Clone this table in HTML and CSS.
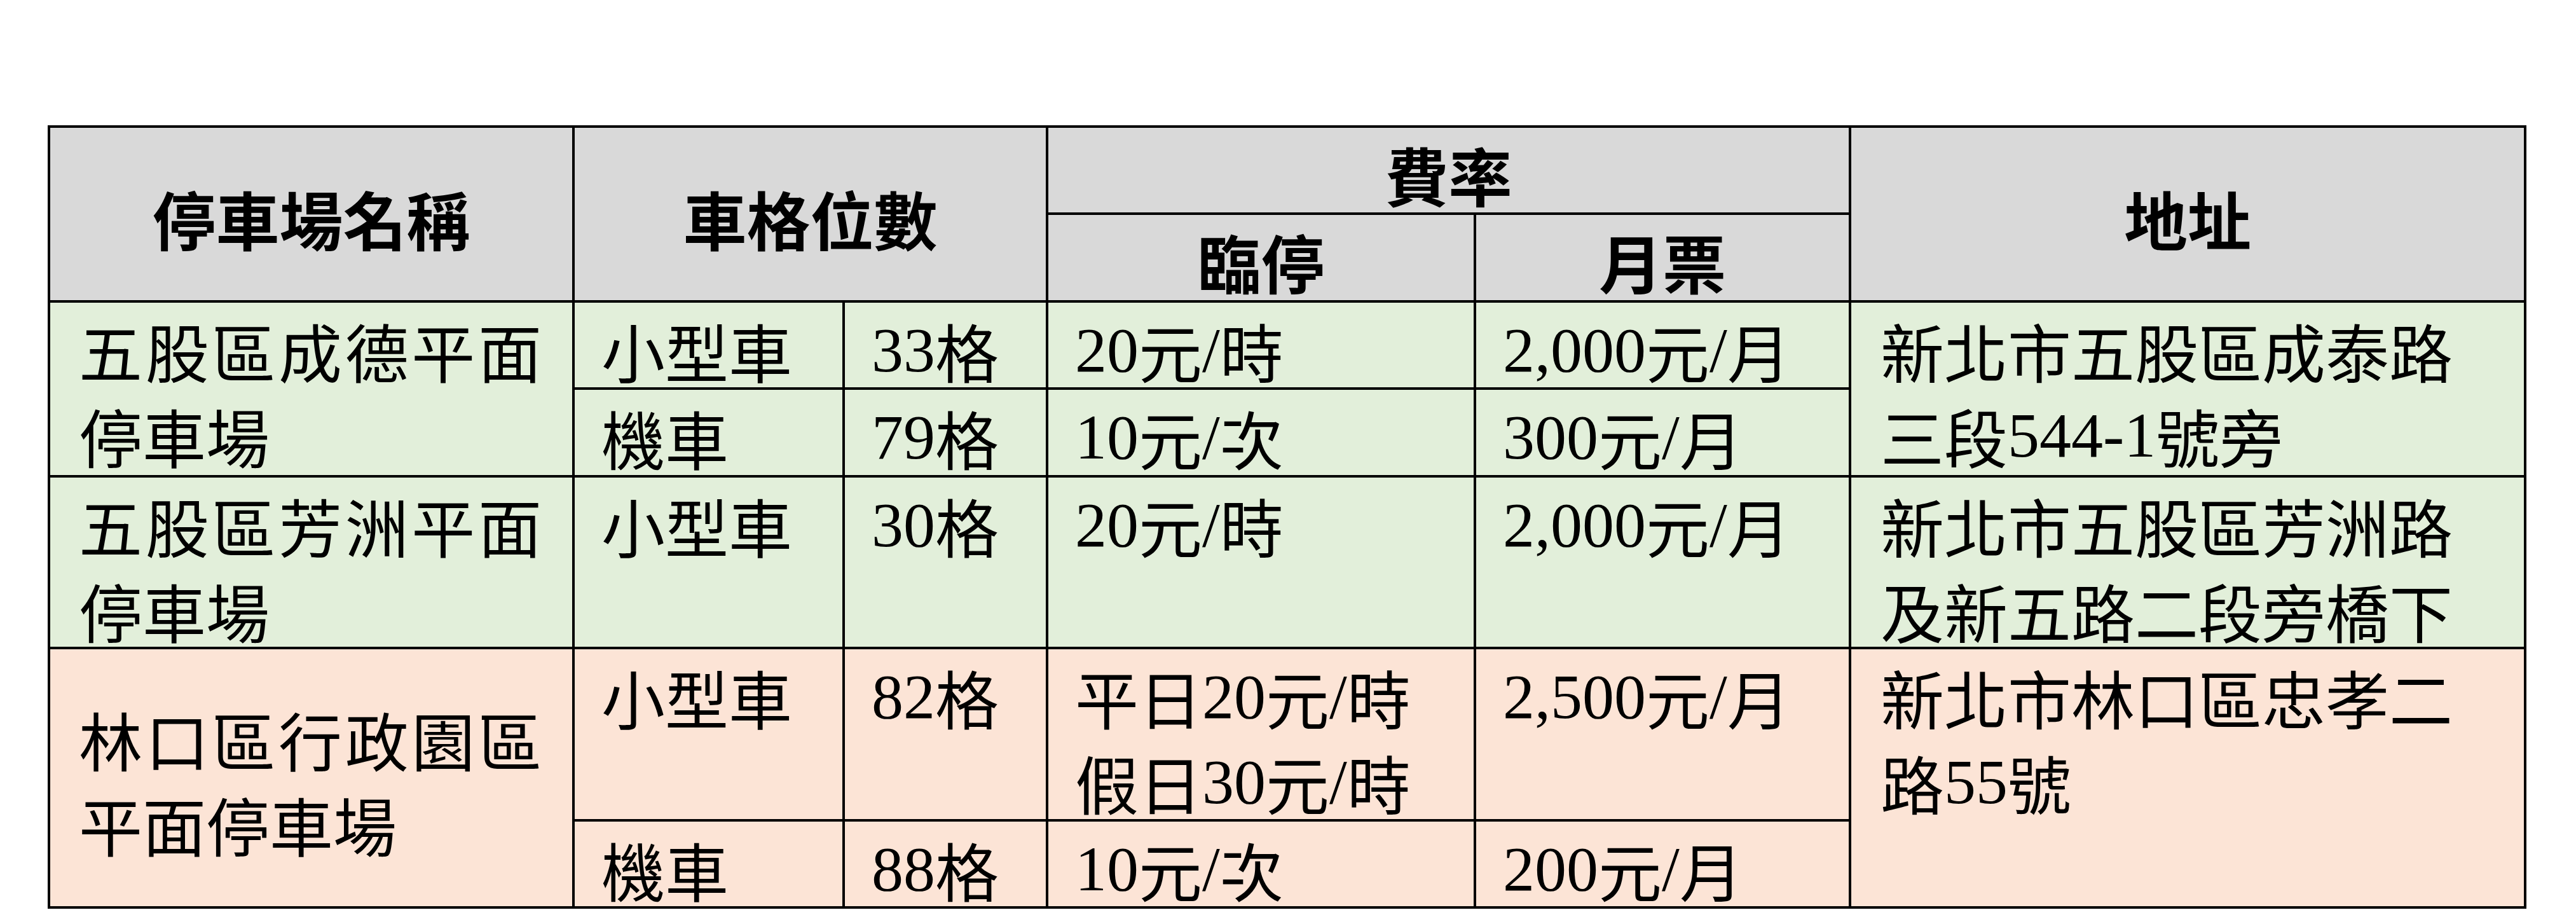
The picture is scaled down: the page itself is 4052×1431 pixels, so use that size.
FILE: index.html
```html
<!DOCTYPE html>
<html lang="zh-Hant">
<head>
<meta charset="utf-8">
<title>停車場資訊</title>
<link rel="stylesheet" href="styles.css">
</head>
<body>
<div class="sheet">
  <div class="tbl">
    <div class="cell hd r2">停車場名稱</div>
    <div class="cell hd r2 c2">車格位數</div>
    <div class="cell hd c2">費率</div>
    <div class="cell hd r2">地址</div>
    <div class="cell hd">臨停</div>
    <div class="cell hd">月票</div>

    <div class="cell g name r2">五股區成德平面停車場</div>
    <div class="cell g">小型車</div>
    <div class="cell g"><span class="n">33</span>格</div>
    <div class="cell g"><span class="n">20</span>元<span class="n">/</span>時</div>
    <div class="cell g"><span class="n">2,000</span>元<span class="n">/</span>月</div>
    <div class="cell g addr r2">新北市五股區成泰路三段<span class="n">544-1</span>號旁</div>
    <div class="cell g">機車</div>
    <div class="cell g"><span class="n">79</span>格</div>
    <div class="cell g"><span class="n">10</span>元<span class="n">/</span>次</div>
    <div class="cell g"><span class="n">300</span>元<span class="n">/</span>月</div>

    <div class="cell g name">五股區芳洲平面停車場</div>
    <div class="cell g">小型車</div>
    <div class="cell g"><span class="n">30</span>格</div>
    <div class="cell g"><span class="n">20</span>元<span class="n">/</span>時</div>
    <div class="cell g"><span class="n">2,000</span>元<span class="n">/</span>月</div>
    <div class="cell g addr">新北市五股區芳洲路及新五路二段旁橋下</div>

    <div class="cell p name mid r2">林口區行政園區平面停車場</div>
    <div class="cell p">小型車</div>
    <div class="cell p"><span class="n">82</span>格</div>
    <div class="cell p">平日<span class="n">20</span>元<span class="n">/</span>時<br>假日<span class="n">30</span>元<span class="n">/</span>時</div>
    <div class="cell p"><span class="n">2,500</span>元<span class="n">/</span>月</div>
    <div class="cell p addr r2">新北市林口區忠孝二路<span class="n">55</span>號</div>
    <div class="cell p">機車</div>
    <div class="cell p"><span class="n">88</span>格</div>
    <div class="cell p"><span class="n">10</span>元<span class="n">/</span>次</div>
    <div class="cell p"><span class="n">200</span>元<span class="n">/</span>月</div>
  </div>
</div>
</body>
</html>
```

FILE: styles.css
```css
* {
  box-sizing: border-box;
}

html,
body {
  margin: 0;
  background: #ffffff;
}

.sheet {
  padding: 197px 0 0 75px;
}

.tbl {
  display: grid;
  grid-template-columns: 821px 421px 316px 669px 586px 1058px;
  grid-template-rows: 133px 134px 133px 134px 266px 267px 133px;
  gap: 4px;
  padding: 4px;
  background: #000000;
  width: max-content;
}

.cell {
  font-family: "Liberation Serif", "Noto Sans CJK TC", serif;
  font-size: 100px;
  line-height: 134px;
  color: #000000;
  padding: 18px 20px 0 42px;
}

.r2 {
  grid-row: span 2;
}

.c2 {
  grid-column: span 2;
}

.hd {
  background: #d9d9d9;
  font-weight: 700;
  display: flex;
  flex-direction: column;
  justify-content: center;
  align-items: center;
  text-align: center;
  padding: 32px 0 0 0;
}

.g {
  background: #e2efda;
}

.p {
  background: #fce4d6;
}

.name {
  padding-left: 45px;
  padding-right: 48px;
  text-align: justify;
}

.name.mid {
  display: flex;
  flex-direction: column;
  justify-content: center;
  padding-top: 32px;
}

.addr {
  padding-left: 46px;
  padding-right: 80px;
}

.n {
  vertical-align: 10px;
  line-height: 1;
}
```
